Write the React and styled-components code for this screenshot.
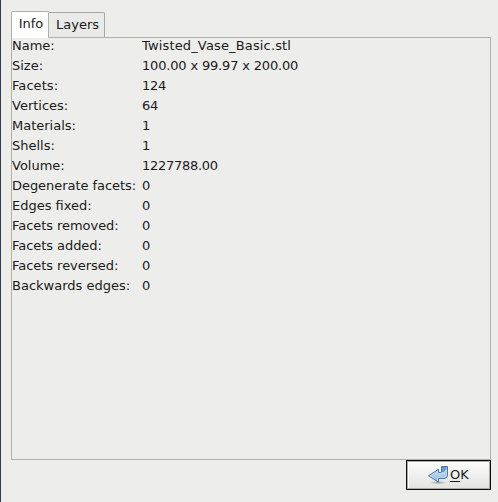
import React from 'react';
import styled, { createGlobalStyle } from 'styled-components';

const GlobalStyle = createGlobalStyle`
  * { box-sizing: border-box; }
  body {
    margin: 0;
    background: #ededeb;
    color: #1a1a1a;
    font: 13px/20px "DejaVu Sans", sans-serif;
  }
`;

const Dialog = styled.main`
  display: flex;
  flex-direction: column;
  width: 498px;
  height: 502px;
  padding: 11px 7px 12px 10px;
  border-left: 1px solid #363d4d;
  overflow: hidden;
`;

const TabBar = styled.div`
  display: flex;
  align-items: flex-end;
  height: 26px;
`;

const Tab = styled.button`
  height: ${(p) => (p.$active ? '27px' : '25px')};
  width: ${(p) => (p.$active ? '38px' : '56px')};
  margin: 0 0 ${(p) => (p.$active ? '-1px' : '0')};
  padding: 0 0 ${(p) => (p.$active ? '2px' : '1px')} 2px;
  border: 1px solid ${(p) => (p.$active ? '#b0b0ae' : '#a5a5a3')};
  border-bottom: 0;
  border-left-width: ${(p) => (p.$active ? '1px' : '0')};
  border-radius: ${(p) => (p.$active ? '2px 2px 0 0' : '0 2px 0 0')};
  background: ${(p) => (p.$active ? '#fff' : 'linear-gradient(#ebebe9, #e8e8e6)')};
  color: inherit;
  font: inherit;
  white-space: nowrap;
  z-index: ${(p) => (p.$active ? 1 : 0)};
`;

const Panel = styled.section`
  height: 423px;
  border: 1px solid #b0b0ae;
`;

const Properties = styled.dl`
  display: grid;
  grid-template-columns: 130px 1fr;
  grid-auto-rows: 20px;
  margin: -2px 0 0;
`;

const Label = styled.dt`
  white-space: nowrap;
  letter-spacing: ${(p) => p.$tracking || 0}px;
`;

const Value = styled.dd`
  margin: 0;
  letter-spacing: ${(p) => p.$tracking || 0}px;
`;

const Actions = styled.footer`
  display: flex;
  justify-content: flex-end;
`;

const OkButton = styled.button`
  display: flex;
  align-items: center;
  justify-content: center;
  gap: 2px;
  width: 85px;
  height: 30px;
  padding: 0 0 1px;
  border: 1px solid #0c0c0c;
  background: linear-gradient(#fdfdfc, #e3e3e0);
  box-shadow: inset 0 0 0 1px #a9a9a6, inset 2px 2px 0 #fff;
  color: inherit;
  font: inherit;
`;

const Mnemonic = styled.span`
  display: inline-block;
  height: 15px;
  line-height: 15px;
  border-bottom: 1px solid #1a1a1a;
`;

const ApplyIcon = () => (
  <svg width="20" height="20" viewBox="0 0 20 20" aria-hidden="true">
    <defs>
      <linearGradient id="arrow" x1="0" y1="0" x2="0" y2="1">
        <stop offset="0" stopColor="#8fb4dc" />
        <stop offset=".5" stopColor="#b7d1ec" />
        <stop offset="1" stopColor="#82acd9" />
      </linearGradient>
      <radialGradient id="shadow">
        <stop offset="0" stopColor="#000" stopOpacity=".3" />
        <stop offset="1" stopColor="#000" stopOpacity="0" />
      </radialGradient>
    </defs>
    <ellipse cx="10.5" cy="17.6" rx="8.5" ry="2" fill="url(#shadow)" />
    <path
      d="M13.5 6.5V1.5h6V10q0 3.5-3.5 3.5h-5.5v3.7L.5 10.7l10-6.4v3.2h2.2q.8 0 .8-1z"
      fill="url(#arrow)"
      stroke="#4675b0"
      strokeLinejoin="round"
    />
    <path
      d="M2.4 10.7l7.1-4.6v2.4h4q2.8 0 4-2.2l1-1.6V10q0 2.5-2.5 2.5H9.5v2.9z"
      fill="none"
      stroke="#dceafa"
      strokeWidth=".6"
      opacity=".8"
    />
    <path d="M14 2h3.2v2.3Q16.5 6.5 14 6.6z" fill="#6f9bcf" />
    <path d="M13.5 6.7q3.7 0 4-3V2" fill="none" stroke="#4675b0" strokeWidth=".7" />
  </svg>
);

const properties = [
  { label: 'Name:', value: 'Twisted_Vase_Basic.stl', tracking: 0.15 },
  { label: 'Size:', value: '100.00 x 99.97 x 200.00', tracking: -0.17 },
  { label: 'Facets:', value: '124', tracking: -0.27, labelTracking: 0.07 },
  { label: 'Vertices:', value: '64', tracking: -0.27 },
  { label: 'Materials:', value: '1' },
  { label: 'Shells:', value: '1' },
  { label: 'Volume:', value: '1227788.00', tracking: -0.27 },
  { label: 'Degenerate facets:', value: '0', labelTracking: -0.05 },
  { label: 'Edges fixed:', value: '0' },
  { label: 'Facets removed:', value: '0', labelTracking: -0.05 },
  { label: 'Facets added:', value: '0', labelTracking: -0.05 },
  { label: 'Facets reversed:', value: '0', labelTracking: -0.04 },
  { label: 'Backwards edges:', value: '0' },
];

export default function App() {
  return (
    <>
      <GlobalStyle />
      <Dialog>
        <TabBar>
          <Tab $active>Info</Tab>
          <Tab>Layers</Tab>
        </TabBar>
        <Panel>
          <Properties>
            {properties.map(({ label, value, tracking, labelTracking }) => (
              <React.Fragment key={label}>
                <Label $tracking={labelTracking}>{label}</Label>
                <Value $tracking={tracking}>{value}</Value>
              </React.Fragment>
            ))}
          </Properties>
        </Panel>
        <Actions>
          <OkButton>
            <ApplyIcon />
            <span><Mnemonic>O</Mnemonic>K</span>
          </OkButton>
        </Actions>
      </Dialog>
    </>
  );
}
